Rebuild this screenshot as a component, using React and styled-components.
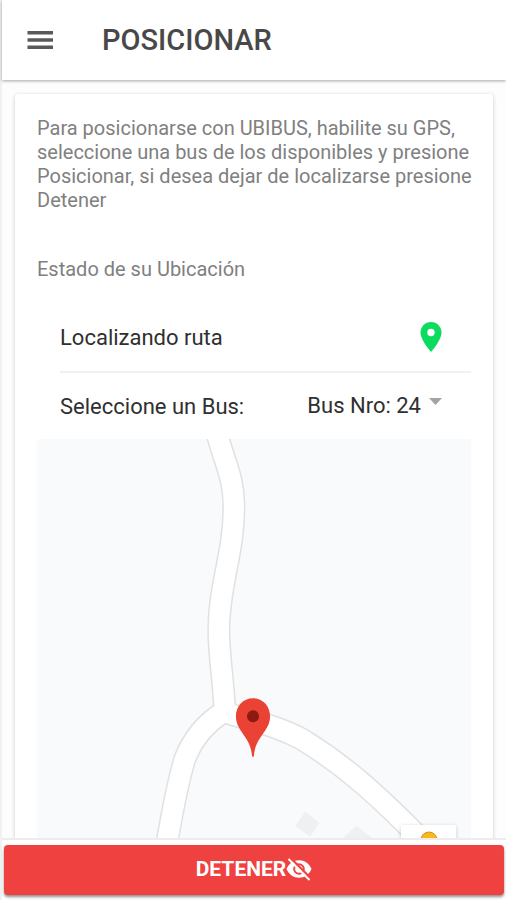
import React, { useState } from "react";
import styled, { createGlobalStyle, css } from "styled-components";

const GlobalStyle = createGlobalStyle`
  * {
    box-sizing: border-box;
  }
  body {
    margin: 0;
    font-family: Roboto, "Liberation Sans", sans-serif;
    background-color: #fdfdfd;
  }
`;

const Page = styled.div`
  display: flex;
  flex-direction: column;
  height: 100vh;
  border-left: 2px solid #f1f1f1;
`;

const Header = styled.header`
  display: flex;
  align-items: center;
  flex-shrink: 0;
  gap: 48px;
  height: 80px;
  padding: 0 24px;
  background-color: #fff;
  box-shadow: 0 1px 3px rgba(0, 0, 0, 0.35);
  z-index: 1;
`;

const MenuButton = styled.button`
  display: flex;
  padding: 0;
  border: none;
  background: none;
  color: #5a5a5a;
  cursor: pointer;
`;

const Title = styled.h1`
  margin: 0;
  color: #484848;
  font-size: 29px;
  font-weight: 500;
`;

const Content = styled.main`
  flex: 1;
  min-height: 0;
  overflow-y: auto;
  scrollbar-width: none;
  padding: 14px 13px;
`;

const Card = styled.section`
  padding: 22px;
  border-radius: 3px;
  background-color: #fff;
  box-shadow: 0 1px 4px rgba(0, 0, 0, 0.2);
`;

const Text = styled.p`
  margin: 0 -8px 45px 0;
  color: #808080;
  font-size: 20px;
  line-height: 24px;
`;

const Subtitle = styled.h2`
  margin: 0;
  color: #808080;
  font-size: 20px;
  font-weight: 400;
  line-height: 24px;
`;

const List = styled.div`
  margin-top: 22px;
  padding-left: 23px;
`;

const Row = styled.div`
  display: flex;
  align-items: center;
  justify-content: space-between;
  height: 66px;
  padding-right: 29px;
  color: #303030;
  font-size: 22px;
  ${(props) =>
    props.divided &&
    css`
      height: 70px;
      border-bottom: 2px solid #f1f1f1;
    `}
`;

const SelectBox = styled.div`
  display: flex;
  align-items: center;
  gap: 8px;
  padding-bottom: 2px;
`;

const Select = styled.select`
  appearance: none;
  padding: 0;
  border: none;
  background: none;
  color: inherit;
  font: inherit;
  text-align-last: right;
  cursor: pointer;
`;

const Caret = styled.svg`
  width: 13px;
  height: 15px;
  pointer-events: none;
`;

const Map = styled.div`
  position: relative;
  height: 450px;
  overflow: hidden;
  background-color: #f8fafb;
`;

const MapDrawing = styled.svg`
  display: block;
  width: 100%;
  height: 100%;
`;

const Pegman = styled.button`
  position: absolute;
  right: 15px;
  bottom: 8px;
  display: flex;
  justify-content: center;
  width: 55px;
  height: 56px;
  padding: 6px 0;
  border: none;
  border-radius: 2px;
  background-color: #fff;
  box-shadow: 0 1px 4px rgba(0, 0, 0, 0.2);
  cursor: pointer;
`;

const Footer = styled.footer`
  flex-shrink: 0;
  padding: 5px 2px;
  border-top: 2px solid #ececec;
  background-color: #fff;
`;

const StopButton = styled.button`
  display: flex;
  align-items: center;
  justify-content: center;
  width: 100%;
  height: 50px;
  padding: 0 0 2px;
  border: none;
  border-radius: 4px;
  background-color: #f04141;
  box-shadow: 0 2px 3px rgba(0, 0, 0, 0.45);
  color: #fff;
  font-family: inherit;
  font-size: 21px;
  font-weight: 700;
  cursor: pointer;
`;

const roads = [
  "M187 271 C167 283 155 298 147 319 C140 342 135 369 129 404 L124 440",
  "M190 273 C216 281 240 286 264 299 C306 325 335 351 374 390 L410 425",
  "M179 -6 C187 25 196 38 196 67 C196 115 181 145 181 190 C181 215 186 245 187 273",
];

function MenuIcon() {
  return (
    <svg width="28" height="20" viewBox="0 0 28 20" fill="currentColor">
      <path d="M1.5 1 H27 V4.5 H1.5 Z M1.5 8.2 H27 V11.7 H1.5 Z M1.5 15.4 H27 V18.9 H1.5 Z" />
    </svg>
  );
}

function PinIcon() {
  return (
    <svg width="22" height="30" viewBox="0 0 22 30" role="img" aria-label="Localizado">
      <path
        d="M11 0 C5 0 0.5 4.7 0.5 10.5 C0.5 18.3 11 30 11 30 C11 30 21.5 18.3 21.5 10.5 C21.5 4.7 17 0 11 0 Z"
        fill="#0bdc5f"
      />
      <circle cx="11" cy="10.5" r="3.7" fill="#fff" />
    </svg>
  );
}

function EyeOffIcon() {
  return (
    <svg width="26" height="24" viewBox="0 0 26 24">
      <path d="M0.5 12 C3 6.3 7.5 3.3 13 3.3 C18.5 3.3 23 6.3 25.5 12 C23 17.7 18.5 20.7 13 20.7 C7.5 20.7 3 17.7 0.5 12 Z" fill="#fff" />
      <circle cx="13" cy="12" r="4.8" fill="#fff" stroke="#f04141" strokeWidth="2" />
      <path d="M4.5 1 L25 21.5" stroke="#f04141" strokeWidth="2.4" />
      <path d="M2.5 2 L23.5 23" stroke="#fff" strokeWidth="2" />
    </svg>
  );
}

function RouteMap() {
  return (
    <Map>
      <MapDrawing viewBox="0 0 432 450" preserveAspectRatio="xMidYMin slice" role="img" aria-label="Mapa">
        <g fill="#eef0f2">
          <path d="M267 371 L281 382 L272 396 L257 385 Z" />
          <path d="M318 385 L336 399 L326 411 L305 397 Z" />
        </g>
        <g fill="none" strokeLinejoin="round">
          {roads.map((d) => (
            <path key={d} d={d} stroke="#dfe1e3" strokeWidth="23" />
          ))}
          {roads.map((d) => (
            <path key={d} d={d} stroke="#fff" strokeWidth="20" />
          ))}
        </g>
        <path
          d="M215 258 C205 258 198 266 198 276 C198 291 213 297 214 315 Q215 318 216 315 C217 297 232 291 232 276 C232 266 225 258 215 258 Z"
          fill="#ea4335"
        />
        <circle cx="215" cy="276" r="6" fill="#8c1a11" />
      </MapDrawing>
      <Pegman aria-label="Street View">
        <svg width="18" height="40" viewBox="0 0 18 40">
          <circle cx="9" cy="9" r="8" fill="#fbb917" stroke="#c99632" strokeWidth="1" />
          <path d="M3 18 H15 V28 H12 V39 H6 V28 H3 Z" fill="#fbb917" />
        </svg>
      </Pegman>
    </Map>
  );
}

function App() {
  const [bus, setBus] = useState("24");

  return (
    <>
      <GlobalStyle />
      <Page>
        <Header>
          <MenuButton aria-label="Menú">
            <MenuIcon />
          </MenuButton>
          <Title>POSICIONAR</Title>
        </Header>
        <Content>
          <Card>
            <Text>
              Para posicionarse con UBIBUS, habilite su GPS, seleccione una bus de los disponibles y
              presione Posicionar, si desea dejar de localizarse presione Detener
            </Text>
            <Subtitle>Estado de su Ubicación</Subtitle>
            <List>
              <Row divided>
                <span>Localizando ruta</span>
                <PinIcon />
              </Row>
              <Row>
                <label htmlFor="bus">Seleccione un Bus:</label>
                <SelectBox>
                  <Select id="bus" value={bus} onChange={(e) => setBus(e.target.value)}>
                    <option value="24">Bus Nro: 24</option>
                  </Select>
                  <Caret viewBox="0 0 13 15">
                    <path d="M0 0 H13 L6.5 7 Z" fill="#a3a3a3" />
                  </Caret>
                </SelectBox>
              </Row>
            </List>
            <RouteMap />
          </Card>
        </Content>
        <Footer>
          <StopButton>
            DETENER
            <EyeOffIcon />
          </StopButton>
        </Footer>
      </Page>
    </>
  );
}

export default App;
